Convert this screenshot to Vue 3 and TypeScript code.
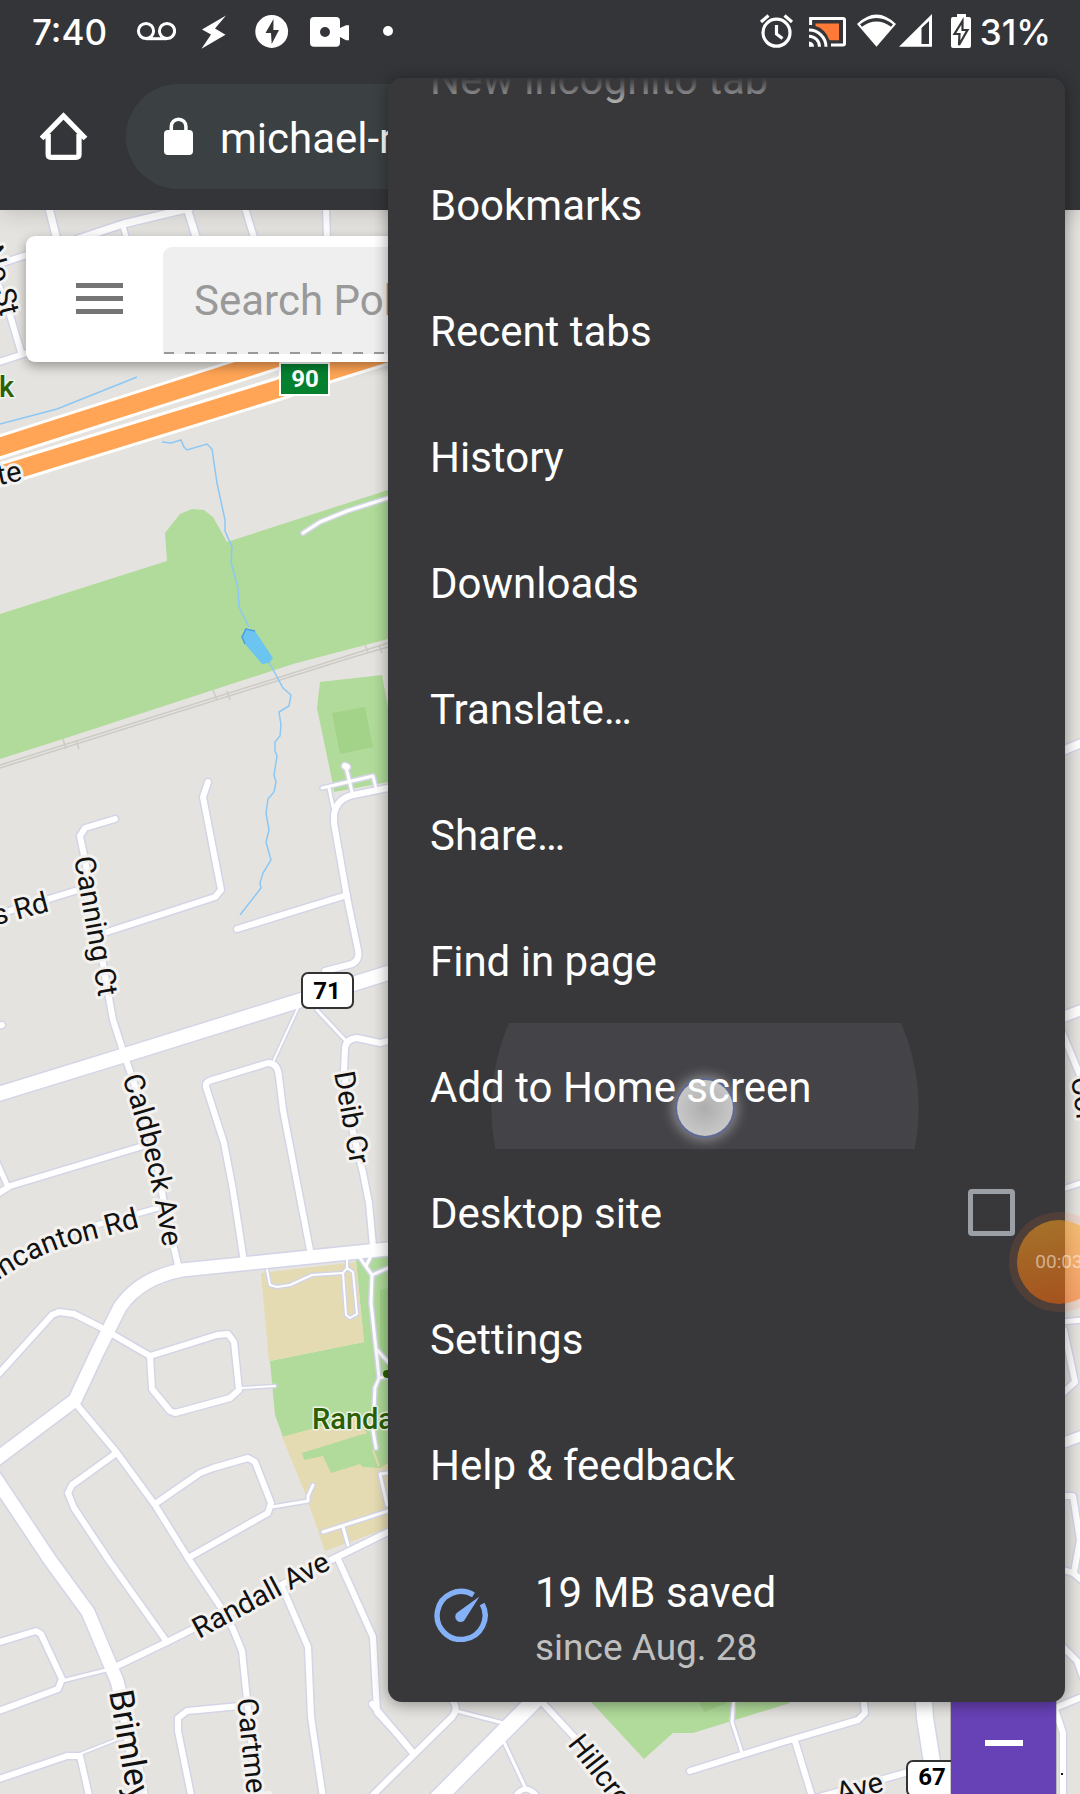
<script setup lang="ts">
import { ref } from 'vue'

interface Road {
  d: string
  w: number
}

interface MapLabel {
  text: string
  x: number
  y: number
  angle: number
  kind?: string
  anchor?: 'start' | 'end'
}

const menuItems: string[] = [
  'Bookmarks',
  'Recent tabs',
  'History',
  'Downloads',
  'Translate…',
  'Share…',
  'Find in page',
  'Add to Home screen',
]
const pressedItem = 'Add to Home screen'
const lowerItems: string[] = ['Settings', 'Help & feedback']

const desktopSite = ref(false)
const query = ref('')

// Footpaths and service lanes
const paths: Road[] = [
  { d: 'M303 533L320 522L347 511L388 498', w: 3 },
  { d: 'M322 788L373 776L376 788', w: 3 },
  { d: 'M346 767L352 792', w: 3 },
  { d: 'M345 766L347 767', w: 6 },
  { d: 'M329 788L333 807', w: 3 },
  { d: 'M298 1008L274 1060', w: 2 },
  { d: 'M317 1010L346 1041', w: 3 },
  { d: 'M242 1388L275 1386', w: 2 },
  { d: 'M272 1507L308 1501L308 1496L313 1485', w: 3 },
  { d: 'M62 1681L110 1669', w: 3 },
  { d: 'M80 1754L118 1739', w: 2 },
  { d: 'M360 1258L372 1275L371 1303L377 1358L379 1378L375 1388L373 1430L376 1448', w: 3 },
  { d: 'M370 1258L366 1266M372 1275L388 1268M377 1350L388 1362M379 1378L388 1376', w: 3 },
  { d: 'M267 1270L270 1285L277 1287L290 1285L312 1275L343 1273', w: 2 },
  { d: 'M347 1258L347 1268L343 1273L346 1315L350 1318L357 1314L353 1272L347 1268', w: 2 },
  { d: 'M323 1532L388 1511M343 1527L348 1545M388 1473L380 1474L387 1505', w: 3 },
  { d: 'M457 1711L503 1723M503 1740L525 1787', w: 3 },
  { d: 'M734 1696L732 1722L742 1753', w: 3 },
]

// Streets, avenues and arterials
const roads: Road[] = [
  { d: 'M49 208L57 240', w: 7 },
  { d: 'M75 240L123 224L190 208', w: 7 },
  { d: 'M123 226L127 240', w: 5 },
  { d: 'M187 208L197 240', w: 7 },
  { d: 'M245 208L256 244', w: 6 },
  { d: 'M326 208L327 240', w: 6 },
  { d: 'M-4 265L30 254', w: 6 },
  { d: 'M-4 363L30 352', w: 6 },
  { d: 'M21 352L7 305L-6 275', w: 6 },
  { d: 'M388 788L353 795Q336 799 334 815L334 823L347 897L358 950Q360 960 352 964L325 971', w: 6 },
  { d: 'M237 929L347 895', w: 6 },
  { d: 'M208 782L203 797L221 890L215 897L107 932', w: 6 },
  { d: 'M115 819L85 828L80 836L85 860L107 987L113 1020L125 1057L133 1080L155 1150L165 1210L178 1265', w: 6 },
  { d: 'M-4 915L78 890', w: 6 },
  { d: 'M-10 1028L2 1025', w: 6 },
  { d: 'M-5 1095L125 1055L388 973', w: 14 },
  { d: 'M388 1041L380 1043L357 1038Q346 1039 345 1048L344 1070L350 1120L363 1173L369 1203L373 1246', w: 6 },
  { d: 'M244 1262L233 1190L224 1143L206 1087Q205 1082 212 1080L268 1063Q278 1063 279 1077L283 1110L310 1250', w: 6 },
  { d: 'M-4 1195L10 1186L143 1146', w: 6 },
  { d: 'M-4 1160L7 1185', w: 5 },
  { d: 'M-4 1275L50 1238L100 1224L158 1208', w: 5 },
  { d: 'M388 1249L182 1270Q140 1278 120 1307L97 1353L75 1400L-6 1461', w: 13 },
  { d: 'M-4 1377L52 1315L59 1312L74 1314L100 1327L150 1356L217 1335L228 1334L234 1342L239 1390L230 1398L175 1413L170 1411L152 1389L150 1356', w: 6 },
  { d: 'M77 1405L117 1453L155 1505L188 1558L220 1606L233 1629L242 1651L247 1700L257 1800', w: 6 },
  { d: 'M155 1504L200 1473L213 1468L248 1458L255 1462L271 1503L268 1513L188 1558', w: 6 },
  { d: 'M115 1454L72 1485L68 1493L74 1508L110 1562L167 1642', w: 6 },
  { d: 'M-6 1476L50 1560L88 1612L117 1681L127 1720L142 1800', w: 13 },
  { d: 'M117 1666L167 1642L193 1629L240 1608L283 1584L337 1557L388 1532', w: 6 },
  { d: 'M-4 1643L36 1631L41 1634L62 1679L58 1689L-4 1712', w: 6 },
  { d: 'M-4 1780L67 1756L80 1756L90 1800', w: 6 },
  { d: 'M240 1706L187 1711L178 1718L178 1731L192 1800', w: 6 },
  { d: 'M283 1589L308 1647L311 1717L323 1798', w: 6 },
  { d: 'M338 1559L373 1637L377 1712L400 1737L413 1753', w: 6 },
  { d: 'M372 1704L413 1753', w: 6 },
  { d: 'M370 1798L380 1788L452 1717Q457 1711 455 1705L450 1695', w: 6 },
  { d: 'M545 1690L436 1800', w: 16 },
  { d: 'M513 1800Q525 1778 540 1800', w: 5 },
  { d: 'M540 1700L577 1740L620 1800', w: 6 },
  { d: 'M690 1771L780 1743L858 1720L865 1713L863 1695', w: 6 },
  { d: 'M795 1741L813 1800', w: 6 },
  { d: 'M923 1690L925 1718L934 1775', w: 16 },
  { d: 'M780 1808L912 1771', w: 6 },
  { d: 'M1060 752L1084 742', w: 8 },
  { d: 'M1060 1018L1084 1009', w: 10 },
  { d: 'M1062 1032L1084 1085', w: 6 },
  { d: 'M1060 1190L1084 1182', w: 5 },
  { d: 'M1060 1322L1084 1320', w: 5 },
  { d: 'M1064 1330L1075 1382L1064 1392', w: 6 },
  { d: 'M1060 1444L1084 1435', w: 10 },
  { d: 'M1060 1496L1073 1496L1080 1540L1074 1572M1060 1569L1073 1573L1084 1582', w: 6 },
  { d: 'M1060 1644L1077 1661L1084 1680', w: 6 },
  { d: 'M1050 1710L1084 1696', w: 6 },
  { d: 'M1056 1712L1063 1733L1063 1800', w: 6 },
]

const labels: MapLabel[] = [
  { text: 'No St', x: 1, y: 317, angle: 75, anchor: 'end' },
  { text: 'Gate', x: 23, y: 480, angle: -12, anchor: 'end' },
  { text: 's Rd', x: 50, y: 911, angle: -15, anchor: 'end' },
  { text: 'Canning Ct', x: 74, y: 858, angle: 80 },
  { text: 'Deib Cr', x: 334, y: 1073, angle: 80 },
  { text: 'Randall Ave', x: 199, y: 1639, angle: -28 },
  { text: 'Cartmell', x: 237, y: 1699, angle: 84 },
  { text: 'Brimley', x: 109, y: 1692, angle: 80, kind: 'big' },
  { text: 'Hillcrest', x: 567, y: 1744, angle: 52 },
  { text: 'Ave', x: 839, y: 1803, angle: -15 },
  { text: 'Col', x: 1071, y: 1078, angle: 82 },
  { text: 'Park', x: 14, y: 397, angle: 0, kind: 'park', anchor: 'end' },
  { text: 'Randa', x: 312, y: 1429, angle: 0, kind: 'park' },
]
</script>

<template>
  <div class="screen">
    <header class="top">
      <div class="status">
        <span class="clock">7:40</span>
        <div class="notes">
          <svg viewBox="135 12 40 40" width="40" height="40" aria-hidden="true">
            <g fill="none" stroke="#fff" stroke-width="3">
              <circle cx="145" cy="31" r="7.6" />
              <circle cx="166" cy="31" r="7.6" />
              <path d="M145 38.7H166" />
            </g>
          </svg>
          <svg viewBox="194 12 40 40" width="40" height="40" aria-hidden="true">
            <path fill="#fff" d="M226 15.500L202 29.500L211 34.500L201.500 48.700L225.500 34.700L215 28.500Z" />
          </svg>
          <svg viewBox="252 12 40 40" width="40" height="40" aria-hidden="true">
            <circle cx="271.7" cy="31.500" r="16.400" fill="#fff" />
            <path fill="#343539" d="M273.500 19L265.500 33H271L271.700 44L279 30H273.400Z" />
          </svg>
          <svg viewBox="310 12 40 40" width="40" height="40" aria-hidden="true">
            <path fill="#fff" d="M314 17H336Q340 17 340 21V28L346 25.200H349V40.300H346L340 37V42.700Q340 46.700 336 46.700H314Q310 46.700 310 42.700V21Q310 17 314 17Z" />
            <circle cx="325" cy="32" r="5" fill="#343539" />
          </svg>
          <svg viewBox="368 12 40 40" width="40" height="40" aria-hidden="true">
            <circle cx="388" cy="31" r="5" fill="#fff" />
          </svg>
        </div>
        <div class="system">
          <svg viewBox="759 12 38 40" width="38" height="40" aria-hidden="true">
            <g fill="none" stroke="#fff" stroke-width="3.200">
              <circle cx="776.500" cy="32.700" r="13.500" />
              <path d="M761 22L768.500 15.500M784.500 15.500L792 22M776.500 25V34L782.500 38.500" />
            </g>
          </svg>
          <svg viewBox="807 12 40 40" width="40" height="40" aria-hidden="true">
            <path fill="#ff7937" d="M815.500 23.500H839V40.300H829.500Q825 28.500 815.500 26Z" />
            <g fill="none" stroke="#fff" stroke-width="3">
              <path d="M810.600 25V18.600H843Q844.500 18.600 844.500 20V43.500Q844.500 45 843 45H831" />
              <path d="M809 30A17 17 0 0 1 826 46.700M809 36.200A10.500 10.500 0 0 1 819.500 46.700" />
            </g>
            <path fill="#fff" d="M809 41.500A5 5 0 0 1 814 46.700H809Z" />
          </svg>
          <svg viewBox="857 12 76 40" width="76" height="40" aria-hidden="true">
            <path fill="#fff" d="M876.500 46.700L857 24Q876.500 5 896 24Z" />
            <path fill="none" stroke="#343539" stroke-width="3.200" d="M861 25.500Q876.500 14 892 25.500" />
            <path fill="#fff" d="M899 46.700L932 14V46.700Z" />
            <path fill="#343539" d="M921.500 28L929 21V44H921.500Z" />
          </svg>
          <svg viewBox="943 12 30 40" width="30" height="40" aria-hidden="true">
            <path fill="#fff" d="M957 14H966V17H969Q971 17 971 19V46Q971 48 969 48H953Q951 48 951 46V19Q951 17 953 17H957Z" />
            <path fill="#fff" stroke="#343539" stroke-width="2.200" d="M962.500 21L954.500 34H959.500L959 45L967.500 30H962.500Z" />
          </svg>
          <span class="clock">31%</span>
        </div>
      </div>
      <div class="toolbar">
        <button class="home" type="button" aria-label="Home">
          <svg viewBox="40 112 48 50" width="48" height="50" aria-hidden="true">
            <g fill="none" stroke="#fff" stroke-width="5.300">
              <path d="M41.500 138.500L63.500 116L85.500 138.500" />
              <path d="M48.200 134V154.500Q48.200 157.300 51 157.300H76Q79 157.300 79 154.500V134" />
              <path d="M43 136.500H48.200M79 136.500H84" stroke-width="4" />
            </g>
          </svg>
        </button>
        <div class="omnibox">
          <svg viewBox="164 116 29 39" width="29" height="39" aria-hidden="true">
            <rect x="164" y="129" width="29" height="25" rx="4" fill="#fff" />
            <path d="M171.300 131V125.500A7.300 7.300 0 0 1 185.900 125.500V131" fill="none" stroke="#fff" stroke-width="3.500" />
          </svg>
          <span class="url">michael-r</span>
        </div>
      </div>
    </header>

    <main class="map">
      <svg class="tiles" viewBox="0 210 1080 1584" preserveAspectRatio="xMinYMin slice" role="img" aria-label="Street map">
        <rect x="0" y="210" width="1080" height="1584" fill="#e5e3df" />

        <g fill="#b0db9a">
          <path d="M0 614L167 561L165 533L180 514L192 509L204 510L213 517L227 542L388 490V639L293 664L213 690L63 739L0 759Z" />
          <path d="M320 682L382 675L388 707V782L334 792L332 780L317 708Z" />
          <path d="M356 1260L388 1255V1465L283 1437L275 1415L270 1361L364 1342Z" />
          <path d="M580 1690L644 1759L673 1733H693L790 1703V1690Z" />
        </g>
        <g fill="#e5dbb2">
          <path d="M261 1273L356 1262L364 1342L269 1361Z" />
          <path d="M282 1437L355 1417L370 1437L388 1465V1528L325 1551L305 1493Z" />
        </g>
        <path fill="#b0db9a" d="M302 1453L360 1435L388 1428V1463L380 1468L363 1467L360 1464L331 1473L323 1456L304 1460Z" />
        <path fill="#e5dbb2" d="M372 1450L374 1450L380 1466L378 1467Z" />
        <g fill="#a3d389">
          <path d="M332 713L365 707L373 747L340 754Z" />
          <path d="M388 1288L380 1290V1345L388 1372Z" />
          <path d="M698 1700L704 1712L727 1703V1698Z" />
        </g>

        <g fill="none" stroke="#cdcac5" stroke-width="1.500">
          <path d="M0 765L350 655L388 643M0 768L350 658L388 647" />
          <path d="M63 739L66 749M76 740L79 749M213 690L217 700M227 691L230 700M365 645L368 652M379 645L382 653" />
        </g>

        <g fill="none" stroke="#8cc8f5" stroke-width="1.500">
          <path d="M0 424L57 409L137 377" />
          <path d="M162 442L171 443L181 440L184 447L187 450L207 444L212 449L217 483L225 520L225 531L232 547L231 562L238 588L239 607L249 627" />
          <path d="M269 662L283 688L291 695L289 706L279 712L281 725L280 736L275 742L275 751L277 756L274 775L276 782L274 792L268 799L266 813L269 830L266 842L271 860L263 873L260 883L261 888L240 915" />
        </g>
        <path fill="#6cc5f0" d="M245 628L255 631L273 658L269 663L262 664L245 644L242 637Z" />
        <path fill="none" stroke="#4f9de0" stroke-width="1.500" d="M255 631L246 629L242 637L245 644" />

        <g fill="none" stroke="#fff" stroke-width="24">
          <path d="M-10 450L277 358L400 319" />
          <path d="M-10 478L278 389L330 371L400 349" />
        </g>
        <g fill="none" stroke="#ffa555" stroke-width="18">
          <path d="M-10 450L277 358L400 319" />
          <path d="M-10 478L278 389L330 371L400 349" />
        </g>

        <g fill="none" stroke="#d3d5e6" stroke-linecap="round" stroke-linejoin="round">
          <path v-for="(p, i) in paths" :key="'pc' + i" :d="p.d" :stroke-width="p.w + 3" />
          <path v-for="(r, i) in roads" :key="'rc' + i" :d="r.d" :stroke-width="r.w + 3" />
        </g>
        <g fill="none" stroke="#fff" stroke-linecap="round" stroke-linejoin="round">
          <path v-for="(p, i) in paths" :key="'p' + i" :d="p.d" :stroke-width="p.w" />
          <path v-for="(r, i) in roads" :key="'r' + i" :d="r.d" :stroke-width="r.w" />
        </g>

        <g class="shields">
          <rect x="279" y="362" width="51" height="34" fill="#fff" />
          <rect x="281" y="364" width="47" height="30" fill="#04802f" />
          <text x="305" y="387" fill="#fff">90</text>
          <rect x="302" y="973" width="51" height="35" rx="6" fill="#fff" stroke="#333" stroke-width="2" />
          <text x="327" y="999">71</text>
          <rect x="907" y="1761" width="51" height="35" rx="6" fill="#fff" stroke="#333" stroke-width="2" />
          <text x="932" y="1785">67</text>
        </g>

        <path id="wincanton" fill="none" d="M-50 1318Q20 1256 80 1243L140 1227" />
        <path id="caldbeck" fill="none" d="M122 1078Q148 1150 165 1260" />
        <g class="labels">
          <text
            v-for="l in labels"
            :key="l.text"
            :class="l.kind"
            :text-anchor="l.anchor ?? 'start'"
            :transform="`translate(${l.x} ${l.y}) rotate(${l.angle})`"
          >{{ l.text }}</text>
          <text text-anchor="end"><textPath href="#wincanton" startOffset="100%">incanton Rd</textPath></text>
          <text><textPath href="#caldbeck">Caldbeck Ave</textPath></text>
        </g>
        <circle cx="387" cy="1374" r="4" fill="#2b6000" />
        <rect x="1061" y="1773" width="2" height="2" fill="#111" />
      </svg>

      <form class="search" @submit.prevent>
        <button class="drawer" type="button" aria-label="Open menu"><i></i><i></i><i></i></button>
        <div class="field">
          <input v-model="query" type="text" placeholder="Search Pol" aria-label="Search" />
        </div>
      </form>

      <button class="zoom-out" type="button" aria-label="Zoom out"><i></i></button>
    </main>

    <nav class="menu" aria-label="Browser menu">
      <button class="item first" type="button"><span>New incognito tab</span></button>
      <button
        v-for="item in menuItems"
        :key="item"
        type="button"
        class="item"
        :class="{ pressed: item === pressedItem }"
      ><span>{{ item }}</span></button>
      <label class="item">
        <span>Desktop site</span>
        <input v-model="desktopSite" type="checkbox" />
      </label>
      <button v-for="item in lowerItems" :key="item" type="button" class="item"><span>{{ item }}</span></button>
      <button class="saved" type="button">
        <svg viewBox="0 0 54 54" width="54" height="54" aria-hidden="true">
          <path d="M39.500 6.900A24 24 0 1 0 48.200 16" fill="none" stroke="#85b1f8" stroke-width="5.400" />
          <path fill="#85b1f8" d="M45.500 8.500L31.500 30.500A5.300 5.300 0 1 1 23.300 24.500Z" />
        </svg>
        <span class="figures">
          <span>19 MB saved</span>
          <small>since Aug. 28</small>
        </span>
      </button>
    </nav>

    <div class="recorder"><span>00:03</span></div>
  </div>
</template>

<style>
body {
  margin: 0;
}
</style>

<style scoped>
.screen {
  position: relative;
  display: flex;
  flex-direction: column;
  min-height: 100vh;
  overflow: hidden;
  font-family: Roboto, 'Liberation Sans', sans-serif;
  color: #fff;
}
button {
  margin: 0;
  padding: 0;
  border: 0;
  background: none;
  color: inherit;
  font: inherit;
  text-align: left;
}
svg {
  display: block;
  flex: none;
}
.top {
  position: relative;
  z-index: 1;
  height: 210px;
  background: #343539;
  box-shadow: 0 0 24px rgba(0, 0, 0, 0.2);
}
.status {
  display: flex;
  align-items: center;
  height: 64px;
  padding: 0 29px 0 32px;
}
.clock {
  font: 500 35px/64px Inter, sans-serif;
}
.notes {
  display: flex;
  gap: 18px;
  margin-left: 29px;
}
.system {
  display: flex;
  align-items: center;
  gap: 10px;
  margin-left: auto;
}
.system .clock {
  margin-left: -3px;
}
.toolbar {
  display: flex;
  align-items: center;
  height: 105px;
  padding-top: 20px;
}
.home {
  flex: none;
  width: 126px;
  padding-left: 40px;
  box-sizing: border-box;
}
.omnibox {
  display: flex;
  flex: 1;
  align-items: center;
  gap: 27px;
  height: 105px;
  margin-right: 126px;
  padding-left: 38px;
  border-radius: 53px;
  background: #3b4042;
}
.url {
  padding-top: 4px;
  font-size: 42px;
  line-height: 52px;
}
.map {
  position: relative;
  flex: 1;
  min-height: 1584px;
  background: #e5e3df;
}
.tiles {
  position: absolute;
  inset: 0;
  width: 100%;
  height: 100%;
}
.shields text {
  font-size: 24px;
  font-weight: 700;
  text-anchor: middle;
}
.labels text {
  font-size: 29px;
  fill: #111;
  stroke: #f3f2f0;
  stroke-width: 6px;
  stroke-linejoin: round;
  paint-order: stroke;
}
.labels .big {
  font-size: 34px;
}
.labels .park {
  fill: #2b6000;
  font-weight: 500;
  stroke: #eef3e8;
  stroke-width: 3px;
}
.search {
  position: relative;
  display: flex;
  align-items: stretch;
  height: 107px;
  margin: 26px;
  padding: 11px 11px 8px 0;
  border-radius: 9px;
  background: #fff;
  box-shadow: 0 4px 12px rgba(0, 0, 0, 0.35);
}
.drawer {
  display: flex;
  flex-direction: column;
  justify-content: center;
  gap: 8px;
  width: 137px;
  padding: 0 0 4px 50px;
}
.drawer i {
  width: 47px;
  height: 5px;
  background: #757575;
}
.field {
  display: flex;
  flex: 1;
  border-radius: 9px 9px 0 0;
  background:
    repeating-linear-gradient(90deg, #999 0 10px, transparent 10px 21px) 1px 100% / 100% 2px no-repeat,
    #efefef;
}
.field input {
  flex: 1;
  min-width: 0;
  padding: 1px 31px 0;
  border: 0;
  outline: 0;
  background: none;
  font: 42px/52px Roboto, sans-serif;
}
.field input::placeholder {
  color: #999;
  opacity: 1;
}
.zoom-out {
  position: absolute;
  right: 24px;
  bottom: 0;
  display: flex;
  align-items: center;
  justify-content: center;
  box-sizing: border-box;
  width: 105px;
  height: 105px;
  padding-top: 3px;
  background: #6741b6;
  box-shadow: 0 0 0 1px rgba(0, 0, 0, 0.2);
}
.zoom-out i {
  width: 38px;
  height: 6px;
  background: #fff;
}
.menu {
  position: absolute;
  z-index: 2;
  top: 78px;
  right: 15px;
  box-sizing: border-box;
  width: 677px;
  overflow: hidden;
  border-radius: 14px;
  background: #38383a;
  box-shadow: 0 2px 16px rgba(0, 0, 0, 0.4);
  font-size: 42px;
  line-height: 52px;
}
.menu::after {
  content: '';
  position: absolute;
  inset: 0 0 auto;
  height: 40px;
  background: linear-gradient(#38383a, rgba(56, 56, 58, 0));
}
.item {
  position: relative;
  display: flex;
  align-items: center;
  justify-content: space-between;
  box-sizing: border-box;
  width: 100%;
  height: 126px;
  padding: 0 50px 0 42px;
}
.item.first {
  margin-top: -63px;
}
.item span {
  position: relative;
  padding-top: 4px;
}
.pressed {
  background: radial-gradient(circle at 317px 85px, #444347 213px, transparent 214px);
}
.pressed::before {
  content: '';
  position: absolute;
  top: 57px;
  left: 289px;
  width: 56px;
  height: 56px;
  border-radius: 50%;
  background: radial-gradient(circle, #adadad, #c9c9c9 75%);
  box-shadow:
    0 0 0 2px #5f6a96,
    0 0 12px 5px rgba(200, 200, 205, 0.5);
}
.item input {
  appearance: none;
  width: 47px;
  height: 47px;
  margin: 0;
  border: 5px solid #9aa0a6;
  border-radius: 4px;
}
.saved {
  display: flex;
  align-items: center;
  gap: 47px;
  box-sizing: border-box;
  width: 100%;
  height: 175px;
  padding: 0 46px;
}
.figures {
  display: flex;
  flex-direction: column;
  padding-top: 10px;
}
.figures span {
  line-height: 56px;
}
.figures small {
  color: #bfbfbf;
  font-size: 37px;
  line-height: 54px;
}
.recorder {
  position: absolute;
  z-index: 3;
  top: 1220px;
  right: -21px;
  display: flex;
  align-items: center;
  justify-content: center;
  width: 84px;
  height: 84px;
  border-radius: 50%;
  background: linear-gradient(170deg, rgba(255, 164, 30, 0.55), rgba(255, 100, 5, 0.55));
  box-shadow: 0 0 0 8px rgba(255, 110, 50, 0.12);
  color: rgba(255, 255, 255, 0.5);
  font-size: 19px;
  line-height: 24px;
}
</style>
